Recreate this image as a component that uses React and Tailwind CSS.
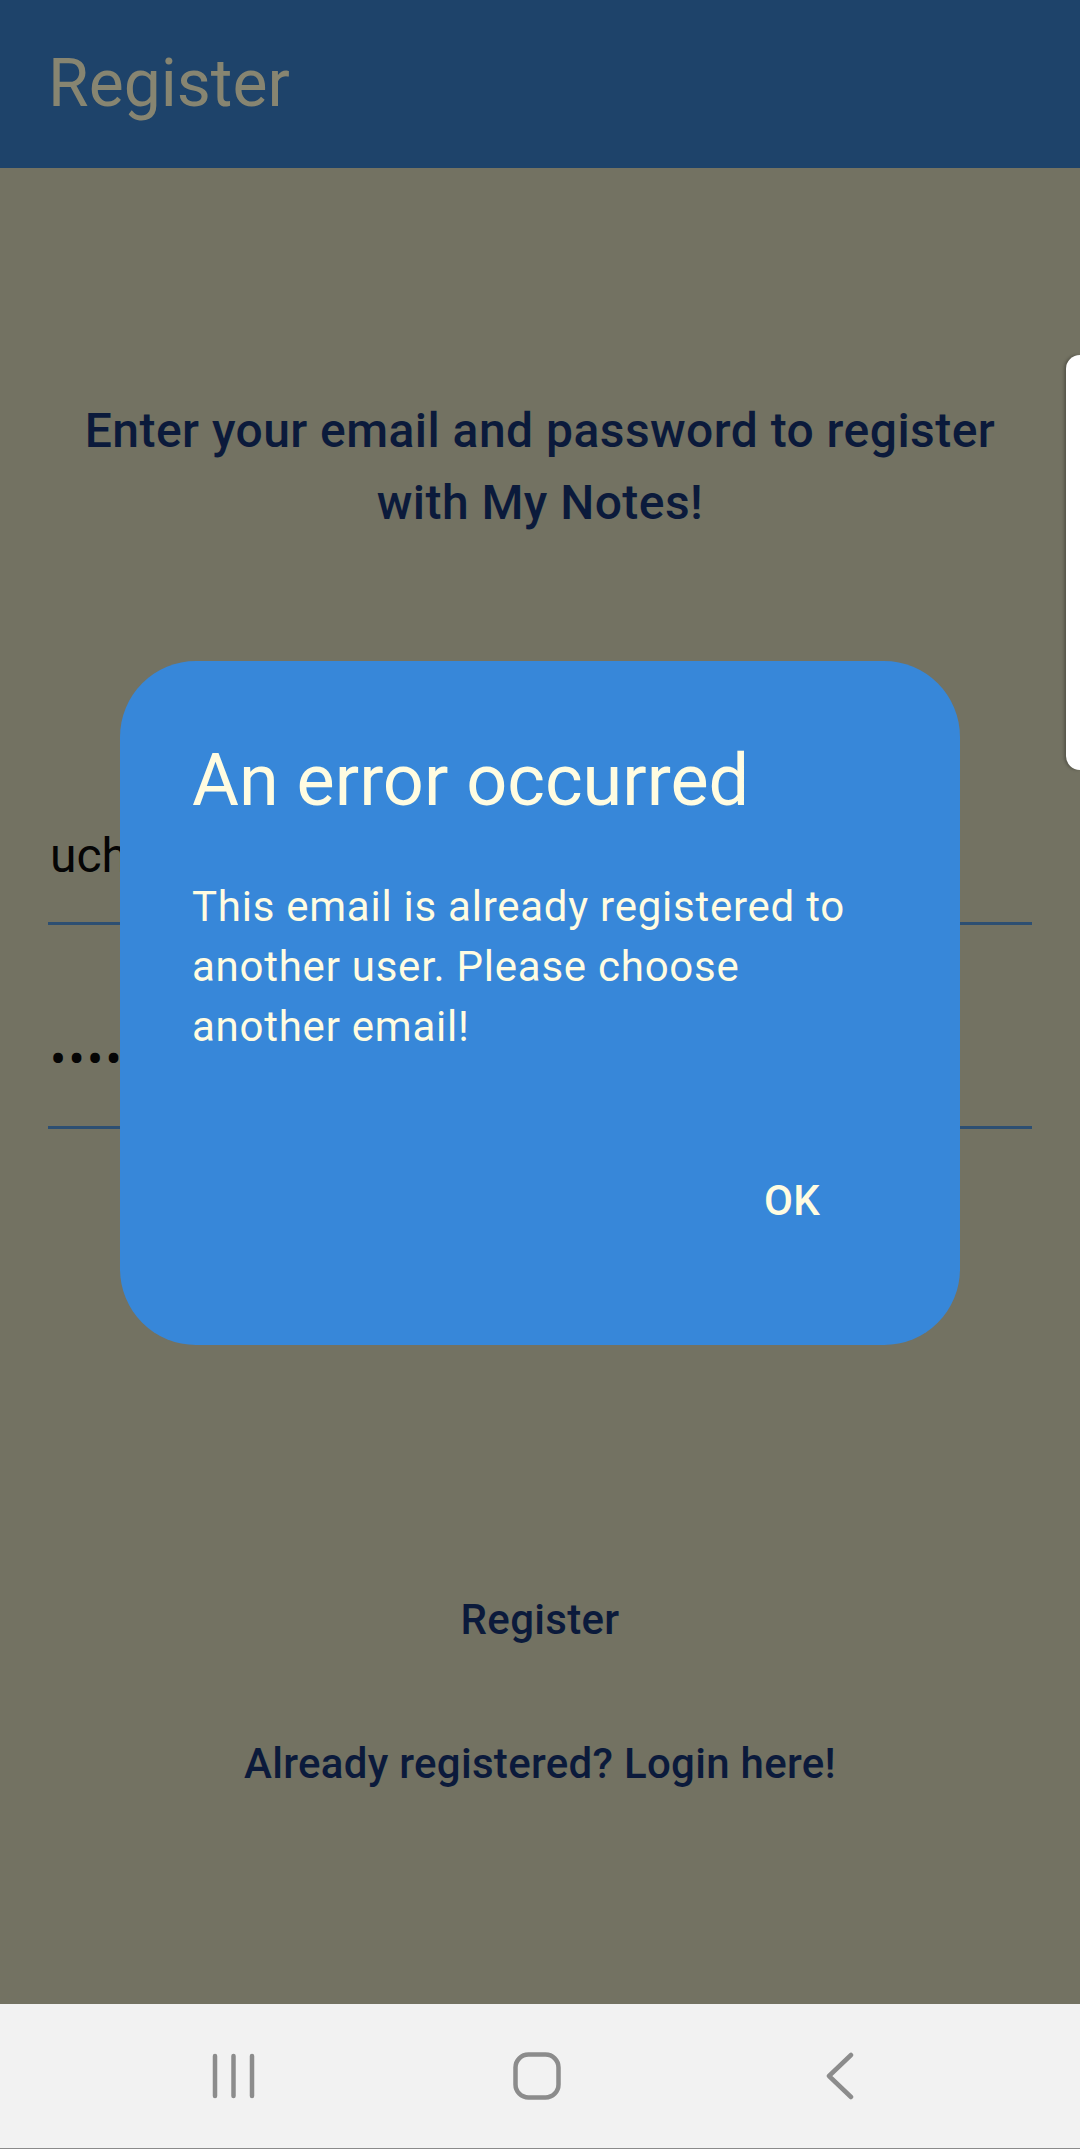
import React from "react";

export default function App() {
  return (
    <div className="relative w-[1080px] h-[2149px] overflow-hidden flex flex-col font-['Roboto',sans-serif] bg-[#737262]">
      {/* App bar */}
      <header className="h-[168px] shrink-0 bg-[#1e436a] flex items-center px-[48px]">
        <h1 className="text-[66px] leading-[88px] font-normal text-[#878571]">Register</h1>
      </header>

      {/* Body */}
      <main className="flex-1 bg-[#737262] px-[48px] pt-[227px]">
        <p className="text-center text-[48px] leading-[72px] tracking-[0.45px] font-medium text-[#0b1a3b]">
          Enter your email and password to register with My Notes!
        </p>

        <div className="mt-[281px]">
          <div className="text-[48px] leading-[72px] text-[#050505] pl-[2px]">uch</div>
          <div className="mt-[30px] h-[3px] bg-[#2d4f72]" />
        </div>

        <div className="mt-[99px]">
          <div className="text-[48px] leading-[72px] text-[#050505] pl-[2px] tracking-[2.3px]">••••••••</div>
          <div className="mt-[30px] h-[3px] bg-[#2d4f72]" />
        </div>

        <div className="mt-[461px] text-center text-[42px] leading-[60px] tracking-[0.3px] font-medium text-[#0b1a3b]">
          Register
        </div>
        <div className="mt-[84px] text-center text-[42px] leading-[60px] tracking-[0.3px] font-medium text-[#0b1a3b]">
          Already registered? Login here!
        </div>
      </main>

      {/* Navigation bar */}
      <nav className="h-[145px] shrink-0 bg-[#f2f2f2] border-b border-[#8a8a8a] flex items-center pl-[211px]">
        <svg width="44" height="46" viewBox="0 0 44 46" fill="none" stroke="#8c8c8c" strokeWidth="4.5" strokeLinecap="round">
          <line x1="4" y1="3" x2="4" y2="43" />
          <line x1="22.5" y1="3" x2="22.5" y2="43" />
          <line x1="41" y1="3" x2="41" y2="43" />
        </svg>
        <svg className="ml-[258px]" width="48" height="48" viewBox="0 0 48 48" fill="none" stroke="#8c8c8c" strokeWidth="4.5">
          <rect x="2.5" y="2.5" width="43" height="43" rx="13" />
        </svg>
        <svg className="ml-[264px]" width="30" height="48" viewBox="0 0 30 48" fill="none" stroke="#8c8c8c" strokeWidth="4.5" strokeLinecap="round" strokeLinejoin="round">
          <polyline points="26,3 4,24 26,45" />
        </svg>
      </nav>

      {/* Edge panel handle */}
      <div className="absolute right-0 top-[355px] w-[14px] h-[415px] bg-white rounded-l-[14px] shadow-[-2px_0_3px_rgba(0,0,0,0.25)]" />

      {/* Dialog */}
      <div className="absolute left-[120px] top-[661px] w-[840px] rounded-[76px] bg-[#3787d9] p-[72px] text-[#fffce1]">
        <h2 className="text-[72px] leading-[96px] font-normal">An error occurred</h2>
        <p className="mt-[48px] text-[42px] leading-[60px] tracking-[0.75px] font-normal">
          This email is already registered to another user. Please choose another email!
        </p>
        <div className="mt-[72px] flex justify-end">
          <div className="w-[192px] h-[144px] flex items-center justify-center text-[42px] leading-[60px] tracking-[0.3px] font-medium">
            OK
          </div>
        </div>
      </div>
    </div>
  );
}
